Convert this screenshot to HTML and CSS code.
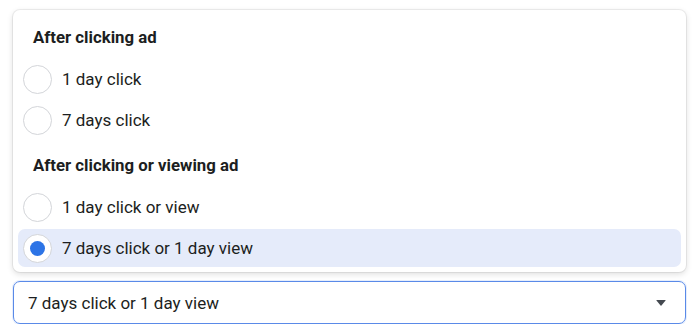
FILE: index.html
```html
<!DOCTYPE html>
<html lang="en">
<head>
  <meta charset="UTF-8">
  <title>Attribution window</title>
  <link rel="stylesheet" href="styles.css">
</head>
<body>

<div class="picker">
  <!-- Dropdown menu -->
  <div class="menu">
    <div class="menu-heading">After clicking ad</div>
    <div class="option">
      <span class="radio"></span>
      <span class="label">1 day click</span>
    </div>
    <div class="option">
      <span class="radio"></span>
      <span class="label">7 days click</span>
    </div>

    <div class="menu-heading">After clicking or viewing ad</div>
    <div class="option">
      <span class="radio"></span>
      <span class="label">1 day click or view</span>
    </div>
    <div class="option selected">
      <span class="radio checked"></span>
      <span class="label">7 days click or 1 day view</span>
    </div>
  </div>

  <!-- Select field -->
  <div class="select">
    <span class="select-value">7 days click or 1 day view</span>
    <span class="caret"></span>
  </div>
</div>

</body>
</html>
```

FILE: styles.css
```css
body {
  margin: 0;
  background: #ffffff;
  font-family: Roboto, "Liberation Sans", Arial, sans-serif;
  color: #1c1e21;
}
.picker {
  width: 673px;
  margin: 10px 0 0 13px;
}
.menu {
  background: #fff;
  border-radius: 7px;
  padding: 4px 5px 5px 5px;
  box-shadow: 0 0 0 1px rgba(0,0,0,0.06), 0 2px 6px rgba(0,0,0,0.14);
}
.menu-heading {
  height: 46px;
  line-height: 46px;
  padding-left: 15px;
  font-size: 16.8px;
  font-weight: 700;
}
.option {
  display: flex;
  align-items: center;
  height: 38px;
  margin-bottom: 3px;
  padding-left: 5px;
  border-radius: 7px;
  font-size: 17px;
}
.option:last-child {
  margin-bottom: 0;
}
.option.selected {
  background: #e5ebfa;
}
.radio {
  box-sizing: border-box;
  width: 29px;
  height: 29px;
  border: 1px solid #d3d5d9;
  border-radius: 50%;
  background: #fff;
  margin-right: 10px;
  display: flex;
  align-items: center;
  justify-content: center;
}
.radio.checked::after {
  content: "";
  width: 15px;
  height: 15px;
  border-radius: 50%;
  background: #2d74e6;
}
.select {
  box-sizing: border-box;
  height: 43px;
  margin-top: 9px;
  border: 1px solid #5a8ae8;
  border-radius: 7px;
  display: flex;
  align-items: center;
  justify-content: space-between;
  padding: 0 19px 0 14px;
  font-size: 17px;
  box-shadow: 0 0 0 1px rgba(90,138,232,0.15);
}
.caret {
  width: 0;
  height: 0;
  border-left: 5px solid transparent;
  border-right: 5px solid transparent;
  border-top: 6px solid #444950;
  border-radius: 1px;
}
```
